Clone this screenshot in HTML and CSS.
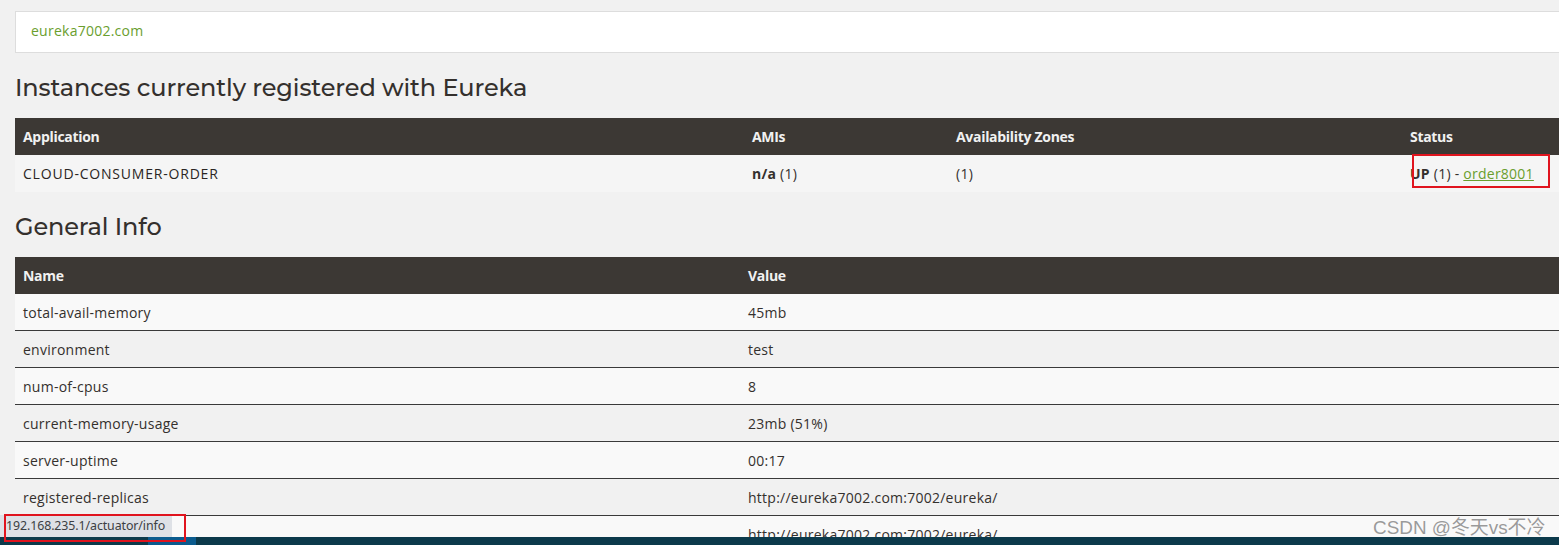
FILE: index.html
```html
<!DOCTYPE html>
<html>
<head>
<meta charset="utf-8">
<link rel="stylesheet" href="styles.css">
</head>
<body>
<div class="page">
  <div class="navbox"><a class="host" href="#">eureka7002.com</a></div>

  <h1 class="title">Instances currently registered with Eureka</h1>
  <table class="grid apps">
    <thead>
      <tr><th class="c1">Application</th><th class="c2">AMIs</th><th class="c3">Availability Zones</th><th>Status</th></tr>
    </thead>
    <tbody>
      <tr class="odd"><td class="strong">CLOUD-CONSUMER-ORDER</td><td><b>n/a</b> (1)</td><td>(1)</td><td class="status"><b>UP</b> (1) - <a class="link" href="#">order8001</a><span class="mark mark-status"></span></td></tr>
    </tbody>
  </table>

  <h1 class="title second">General Info</h1>
  <table class="grid info">
    <thead>
      <tr><th class="n1">Name</th><th>Value</th></tr>
    </thead>
    <tbody>
      <tr><td>total-avail-memory</td><td>45mb</td></tr>
      <tr><td>environment</td><td>test</td></tr>
      <tr><td>num-of-cpus</td><td>8</td></tr>
      <tr><td>current-memory-usage</td><td>23mb (51%)</td></tr>
      <tr><td>server-uptime</td><td>00:17</td></tr>
      <tr><td>registered-replicas</td><td>http://eureka7002.com:7002/eureka/</td></tr>
      <tr><td>&nbsp;</td><td>http://eureka7002.com:7002/eureka/</td></tr>
    </tbody>
  </table>
</div>

<div class="footer-bar"><span class="footer-blue"></span></div>
<div class="tooltip">192.168.235.1/actuator/info</div>
<span class="mark mark-tip"></span>
<div class="watermark">CSDN @冬天vs不冷</div>
</body>
</html>
```

FILE: styles.css
```css
html, body {
  margin: 0;
  padding: 0;
  overflow: hidden;
  height: 545px;
}
body {
  background: #f1f1f1;
  font-family: "Open Sans", "Noto Sans", sans-serif;
  font-size: 14px;
  color: #34302d;
  position: relative;
  width: 1559px;
}
.page {
  padding: 11px 0 0 15px;
  width: 1600px;
}
.navbox {
  background: #fff;
  border: 1px solid #dddddd;
  border-right: none;
  box-sizing: border-box;
  height: 42px;
  display: flex;
  align-items: center;
  padding-left: 15px;
  padding-bottom: 3px;
}
.host {
  color: #6a9e2e;
  text-decoration: none;
  font-size: 14px;
  letter-spacing: 0.25px;
}
.title {
  font-family: "Montserrat", "Open Sans", "Noto Sans", sans-serif;
  font-weight: 500;
  font-size: 24px;
  letter-spacing: -0.1px;
  margin: 20px 0 15px 0;
  line-height: 30px;
  color: #34302d;
}
.title.second {
  margin-top: 20px;
  margin-bottom: 15px;
}
.grid {
  border-collapse: collapse;
  width: 1585px;
  table-layout: fixed;
}
.grid th {
  background: #3c3834;
  color: #f1f1f1;
  font-weight: 700;
  text-align: left;
  height: 37px;
  padding: 0 8px;
  font-size: 14px;
  letter-spacing: -0.3px;
}
.grid td {
  height: 36px;
  padding: 0 8px;
  white-space: nowrap;
  letter-spacing: 0.25px;
}
.apps .c1 { width: 713px; }
.apps .c2 { width: 188px; }
.apps .c3 { width: 438px; }
.apps td { height: 37px; background: #f5f5f5; }
.strong { font-weight: 500; letter-spacing: 0.8px !important; color: #2a2623; }
.info .n1 { width: 709px; }
.info tbody tr { border-top: 1px solid #3a3a3a; }
.info tbody tr:first-child { border-top: none; }
.info tbody tr:nth-child(odd) td { background: #f9f9f9; }
.info tbody tr:nth-child(even) td { background: #f1f1f1; }
.status { position: relative; }
.link {
  color: #6a9e2e;
  text-decoration: underline;
}
.mark {
  position: absolute;
  border: 2px solid #e0141e;
  box-sizing: border-box;
}
.mark-status {
  left: 10px;
  top: -1px;
  width: 138px;
  height: 34px;
}
.footer-bar {
  position: absolute;
  left: 0;
  top: 537px;
  width: 1559px;
  height: 8px;
  background: #0c3a4b;
}
.footer-blue {
  position: absolute;
  left: 148px;
  top: 0;
  width: 48px;
  height: 8px;
  background: #0b5b8e;
}
.tooltip {
  position: absolute;
  left: 0;
  top: 515px;
  height: 22px;
  width: 166px;
  padding-left: 6px;
  background: #dee1e6;
  color: #3c4043;
  font-family: "Noto Sans", "Open Sans", sans-serif;
  font-size: 12.4px;
  line-height: 22px;
  letter-spacing: -0.1px;
}
.mark-tip {
  left: 4px;
  top: 514px;
  width: 182px;
  height: 28px;
}
.watermark {
  position: absolute;
  left: 1373px;
  top: 512px;
  font-family: "Liberation Sans", "Noto Sans CJK SC", sans-serif;
  font-size: 18.9px;
  color: #9a9a9a;
  text-shadow: 0 0 1px #fff, 0 0 1px #fff;
}
```
